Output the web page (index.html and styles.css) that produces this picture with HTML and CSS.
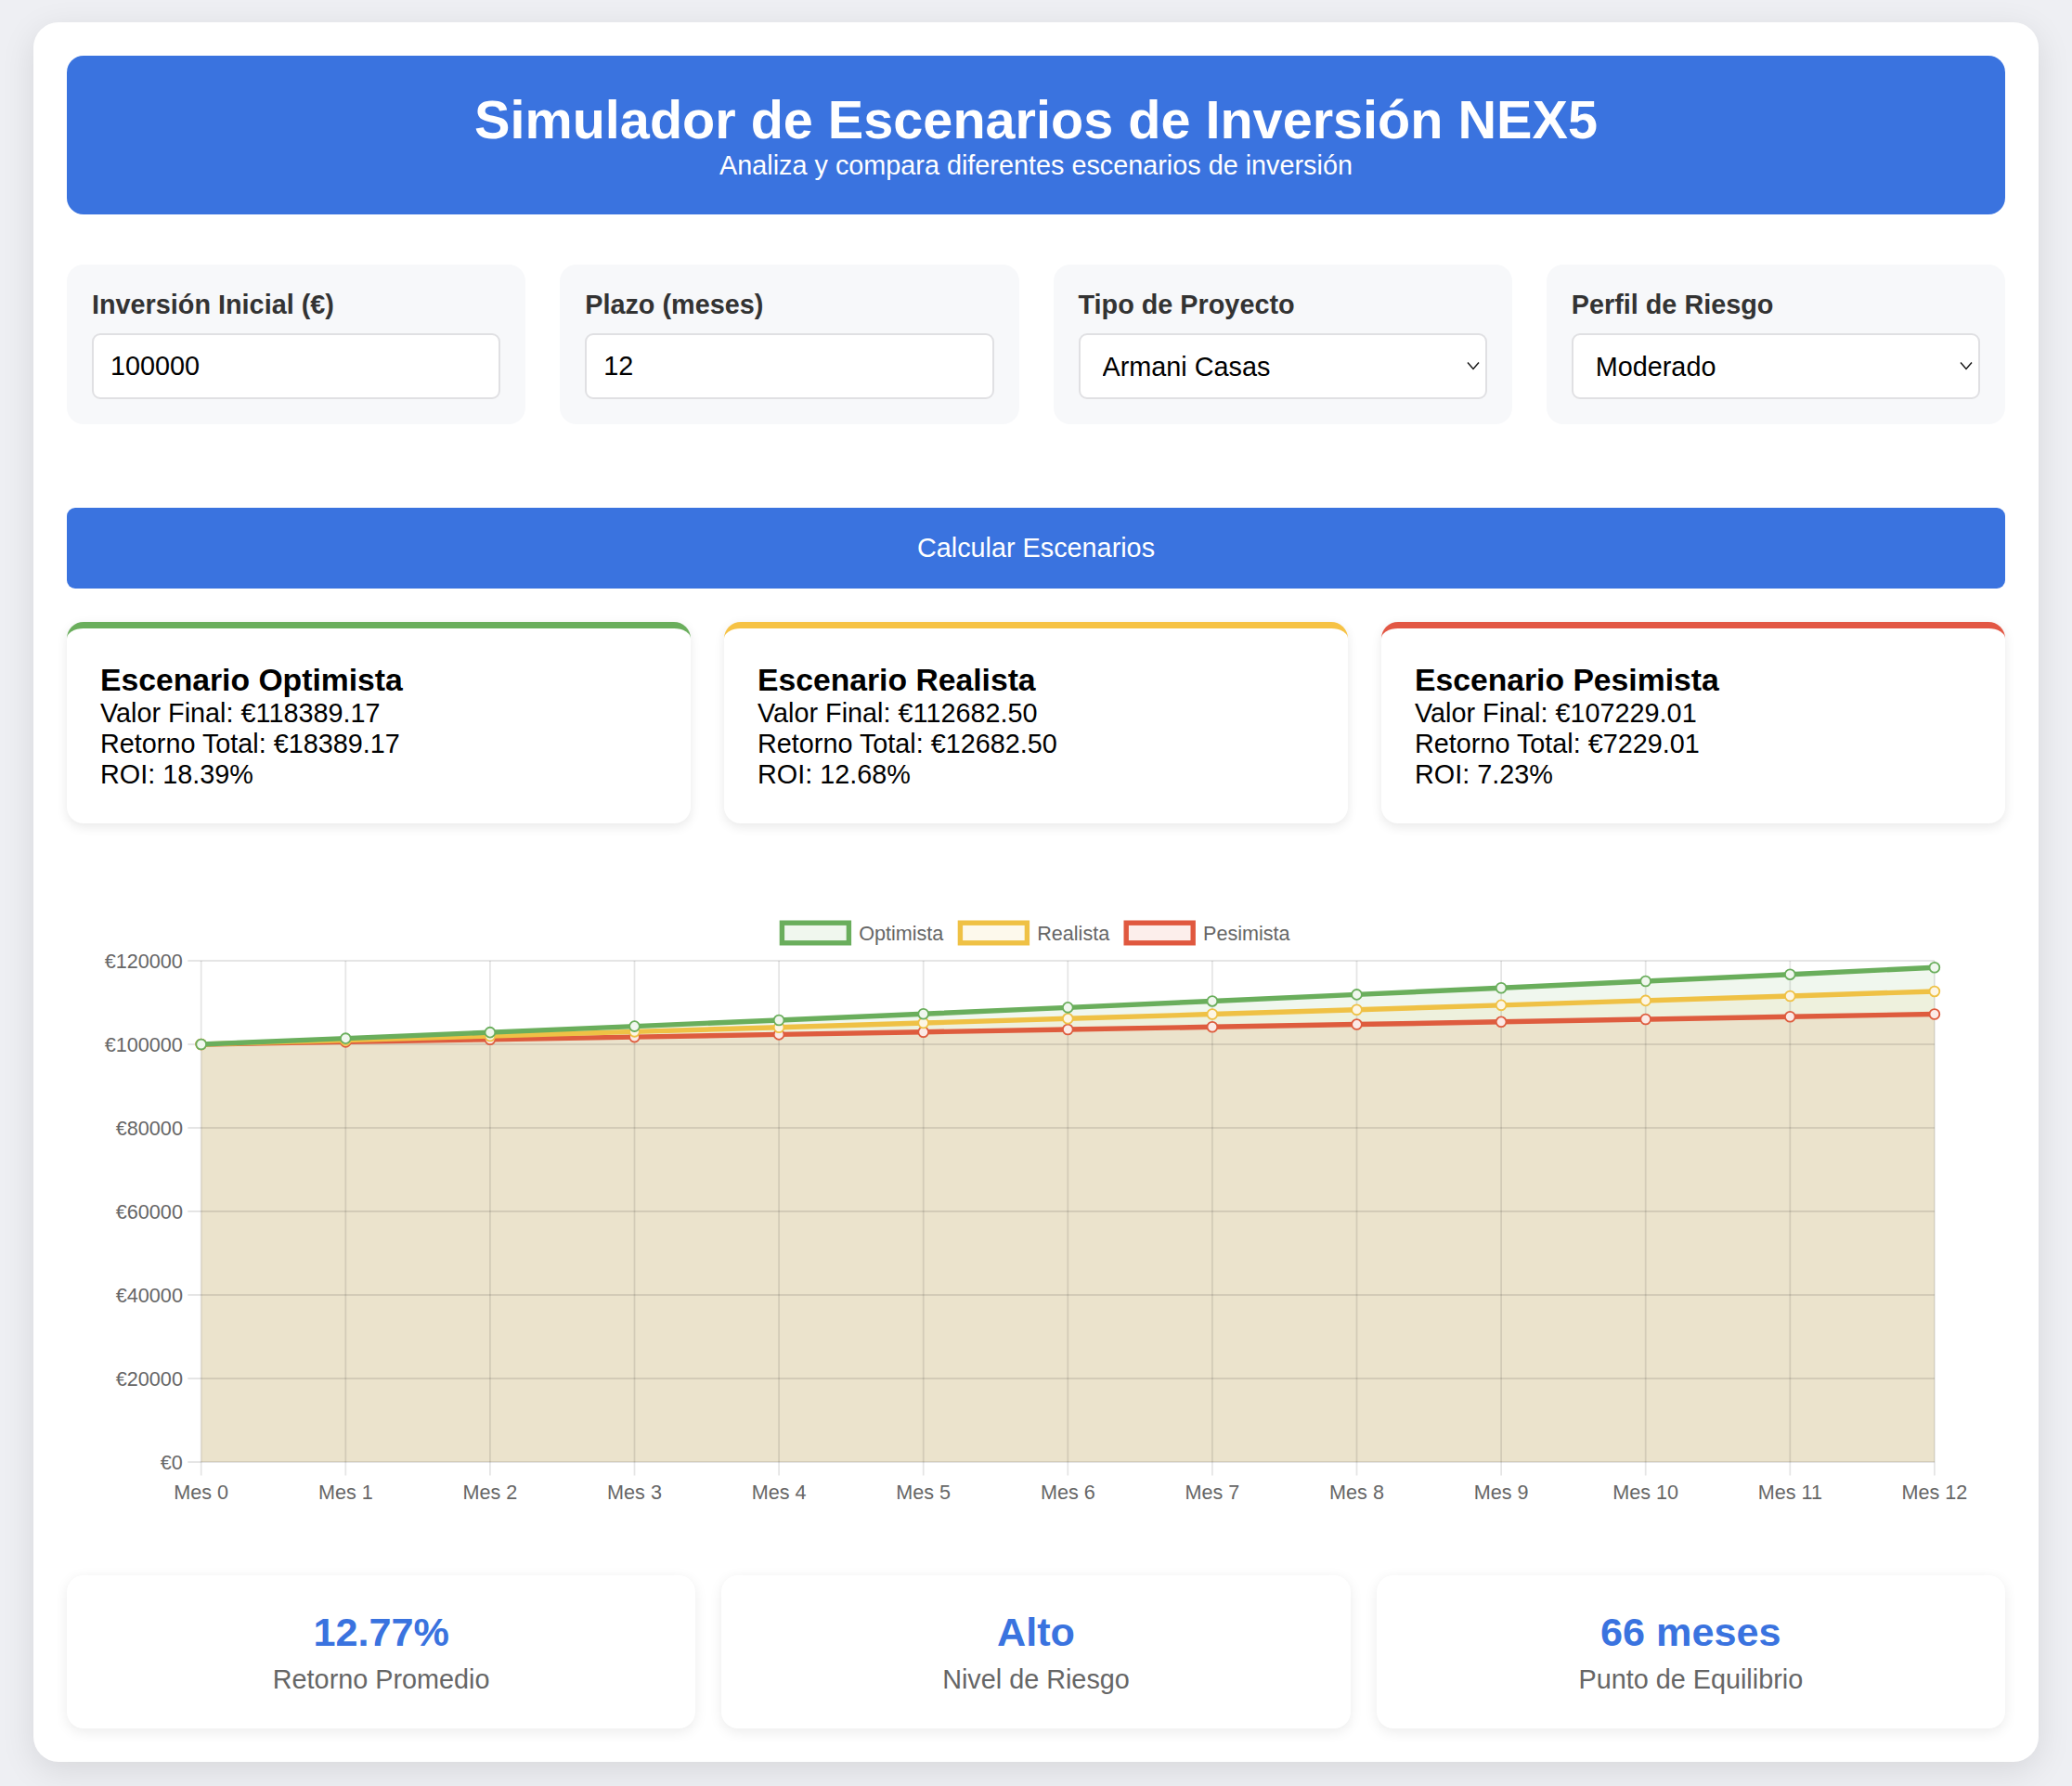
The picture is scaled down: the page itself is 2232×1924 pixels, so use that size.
FILE: index.html
```html
<!DOCTYPE html>
<html lang="es">
<head>
<meta charset="utf-8">
<title>Simulador de Escenarios de Inversión NEX5</title>
<link rel="stylesheet" href="styles.css">
</head>
<body>
<div class="container">
  <header class="hero">
    <h1>Simulador de Escenarios de Inversión NEX5</h1>
    <p>Analiza y compara diferentes escenarios de inversión</p>
  </header>

  <div class="inputs">
    <div class="field">
      <label>Inversión Inicial (€)</label>
      <input type="text" value="100000">
    </div>
    <div class="field">
      <label>Plazo (meses)</label>
      <input type="text" value="12">
    </div>
    <div class="field">
      <label>Tipo de Proyecto</label>
      <div class="select-wrap">
        <select><option>Armani Casas</option></select>
        <svg class="chev" width="14" height="10" viewBox="0 0 14 10"><polyline points="1,1.5 7,8.5 13,1.5" fill="none" stroke="#111" stroke-width="1.4"/></svg>
      </div>
    </div>
    <div class="field">
      <label>Perfil de Riesgo</label>
      <div class="select-wrap">
        <select><option>Moderado</option></select>
        <svg class="chev" width="14" height="10" viewBox="0 0 14 10"><polyline points="1,1.5 7,8.5 13,1.5" fill="none" stroke="#111" stroke-width="1.4"/></svg>
      </div>
    </div>
  </div>

  <button class="calc">Calcular Escenarios</button>

  <div class="scenarios">
    <div class="scenario optimista">
      <h3>Escenario Optimista</h3>
      <p>Valor Final: €118389.17</p>
      <p>Retorno Total: €18389.17</p>
      <p>ROI: 18.39%</p>
    </div>
    <div class="scenario realista">
      <h3>Escenario Realista</h3>
      <p>Valor Final: €112682.50</p>
      <p>Retorno Total: €12682.50</p>
      <p>ROI: 12.68%</p>
    </div>
    <div class="scenario pesimista">
      <h3>Escenario Pesimista</h3>
      <p>Valor Final: €107229.01</p>
      <p>Retorno Total: €7229.01</p>
      <p>ROI: 7.23%</p>
    </div>
  </div>

  <div class="chart">
    <svg width="2088" height="738" viewBox="72 923 2088 738">
      <defs>
        <marker id="mg" markerUnits="userSpaceOnUse" markerWidth="20" markerHeight="20" refX="10" refY="10" viewBox="0 0 20 20"><circle cx="10" cy="10" r="5.4" fill="#f0f7ee" stroke="#6aae5c" stroke-width="1.8"/></marker>
        <marker id="my" markerUnits="userSpaceOnUse" markerWidth="20" markerHeight="20" refX="10" refY="10" viewBox="0 0 20 20"><circle cx="10" cy="10" r="5.4" fill="#fdf6e4" stroke="#efc145" stroke-width="1.8"/></marker>
        <marker id="mr" markerUnits="userSpaceOnUse" markerWidth="20" markerHeight="20" refX="10" refY="10" viewBox="0 0 20 20"><circle cx="10" cy="10" r="5.4" fill="#fbeae6" stroke="#de5c3e" stroke-width="1.8"/></marker>
      </defs>

      <g class="legend">
        <rect x="842.4" y="994.2" width="72" height="21.6" fill="rgba(106,174,92,0.1)" stroke="#6aae5c" stroke-width="5.4"/>
        <text x="925.2" y="1012.7">Optimista</text>
        <rect x="1034.4" y="994.2" width="72" height="21.6" fill="rgba(239,193,69,0.1)" stroke="#efc145" stroke-width="5.4"/>
        <text x="1117.2" y="1012.7">Realista</text>
        <rect x="1213.2" y="994.2" width="72" height="21.6" fill="rgba(224,88,63,0.1)" stroke="#e0583f" stroke-width="5.4"/>
        <text x="1296" y="1012.7">Pesimista</text>
      </g>

      <polygon points="216.7,1125 372.3,1122.38 527.9,1119.73 683.5,1117.08 839.1,1114.41 994.7,1111.72 1150.3,1109.02 1305.9,1106.3 1461.5,1103.57 1617.1,1100.82 1772.7,1098.05 1928.3,1095.27 2083.9,1092.47 2083.9,1575 216.7,1575" fill="rgba(224,88,63,0.1)"/>
      <polygon points="216.7,1125 372.3,1120.5 527.9,1115.96 683.5,1111.36 839.1,1106.73 994.7,1102.05 1150.3,1097.32 1305.9,1092.54 1461.5,1087.71 1617.1,1082.84 1772.7,1077.92 1928.3,1072.95 2083.9,1067.93 2083.9,1575 216.7,1575" fill="rgba(239,193,69,0.1)"/>
      <polygon points="216.7,1125 372.3,1118.63 527.9,1112.16 683.5,1105.6 839.1,1098.95 994.7,1092.21 1150.3,1085.37 1305.9,1078.43 1461.5,1071.4 1617.1,1064.26 1772.7,1057.03 1928.3,1049.69 2083.9,1042.25 2083.9,1575 216.7,1575" fill="rgba(106,174,92,0.1)"/>

      <g class="grid">
        <line x1="202.3" y1="1035" x2="2083.9" y2="1035"/>
        <line x1="202.3" y1="1125" x2="2083.9" y2="1125"/>
        <line x1="202.3" y1="1215" x2="2083.9" y2="1215"/>
        <line x1="202.3" y1="1305" x2="2083.9" y2="1305"/>
        <line x1="202.3" y1="1395" x2="2083.9" y2="1395"/>
        <line x1="202.3" y1="1485" x2="2083.9" y2="1485"/>
        <line x1="202.3" y1="1575" x2="2083.9" y2="1575"/>
        <line x1="216.7" y1="1035" x2="216.7" y2="1589.4"/>
        <line x1="372.3" y1="1035" x2="372.3" y2="1589.4"/>
        <line x1="527.9" y1="1035" x2="527.9" y2="1589.4"/>
        <line x1="683.5" y1="1035" x2="683.5" y2="1589.4"/>
        <line x1="839.1" y1="1035" x2="839.1" y2="1589.4"/>
        <line x1="994.7" y1="1035" x2="994.7" y2="1589.4"/>
        <line x1="1150.3" y1="1035" x2="1150.3" y2="1589.4"/>
        <line x1="1305.9" y1="1035" x2="1305.9" y2="1589.4"/>
        <line x1="1461.5" y1="1035" x2="1461.5" y2="1589.4"/>
        <line x1="1617.1" y1="1035" x2="1617.1" y2="1589.4"/>
        <line x1="1772.7" y1="1035" x2="1772.7" y2="1589.4"/>
        <line x1="1928.3" y1="1035" x2="1928.3" y2="1589.4"/>
        <line x1="2083.9" y1="1035" x2="2083.9" y2="1589.4"/>
      </g>

      <g class="ylab">
        <text x="196.9" y="1042.7">€120000</text>
        <text x="196.9" y="1132.7">€100000</text>
        <text x="196.9" y="1222.7">€80000</text>
        <text x="196.9" y="1312.7">€60000</text>
        <text x="196.9" y="1402.7">€40000</text>
        <text x="196.9" y="1492.7">€20000</text>
        <text x="196.9" y="1582.7">€0</text>
      </g>
      <g class="xlab">
        <text x="216.7" y="1615">Mes 0</text>
        <text x="372.3" y="1615">Mes 1</text>
        <text x="527.9" y="1615">Mes 2</text>
        <text x="683.5" y="1615">Mes 3</text>
        <text x="839.1" y="1615">Mes 4</text>
        <text x="994.7" y="1615">Mes 5</text>
        <text x="1150.3" y="1615">Mes 6</text>
        <text x="1305.9" y="1615">Mes 7</text>
        <text x="1461.5" y="1615">Mes 8</text>
        <text x="1617.1" y="1615">Mes 9</text>
        <text x="1772.7" y="1615">Mes 10</text>
        <text x="1928.3" y="1615">Mes 11</text>
        <text x="2083.9" y="1615">Mes 12</text>
      </g>

      <polyline class="ln" points="216.7,1125 372.3,1122.38 527.9,1119.73 683.5,1117.08 839.1,1114.41 994.7,1111.72 1150.3,1109.02 1305.9,1106.3 1461.5,1103.57 1617.1,1100.82 1772.7,1098.05 1928.3,1095.27 2083.9,1092.47" stroke="#de5c3e" marker-start="url(#mr)" marker-mid="url(#mr)" marker-end="url(#mr)"/>
      <polyline class="ln" points="216.7,1125 372.3,1120.5 527.9,1115.96 683.5,1111.36 839.1,1106.73 994.7,1102.05 1150.3,1097.32 1305.9,1092.54 1461.5,1087.71 1617.1,1082.84 1772.7,1077.92 1928.3,1072.95 2083.9,1067.93" stroke="#efc145" marker-start="url(#my)" marker-mid="url(#my)" marker-end="url(#my)"/>
      <polyline class="ln" points="216.7,1125 372.3,1118.63 527.9,1112.16 683.5,1105.6 839.1,1098.95 994.7,1092.21 1150.3,1085.37 1305.9,1078.43 1461.5,1071.4 1617.1,1064.26 1772.7,1057.03 1928.3,1049.69 2083.9,1042.25" stroke="#6aae5c" marker-start="url(#mg)" marker-mid="url(#mg)" marker-end="url(#mg)"/>
    </svg>
  </div>

  <div class="stats">
    <div class="stat">
      <div class="stat-value">12.77%</div>
      <div class="stat-label">Retorno Promedio</div>
    </div>
    <div class="stat">
      <div class="stat-value">Alto</div>
      <div class="stat-label">Nivel de Riesgo</div>
    </div>
    <div class="stat">
      <div class="stat-value">66 meses</div>
      <div class="stat-label">Punto de Equilibrio</div>
    </div>
  </div>
</div>
</body>
</html>
```

FILE: styles.css
```css
* { box-sizing: border-box; }

html, body {
  margin: 0;
}

body {
  padding: 24px 36px 28px;
  background: #eeeff3;
  font-family: "Liberation Sans", Arial, Helvetica, sans-serif;
  font-size: 28.8px;
  color: #000;
}

.container {
  background: #fff;
  border-radius: 27px;
  padding: 36px;
  box-shadow: 0 9px 36px rgba(0, 0, 0, 0.1);
}

.hero {
  background: #3a73df;
  color: #fff;
  border-radius: 18px;
  padding: 36px;
  text-align: center;
}

.hero h1 {
  margin: 0;
  font-size: 57.6px;
  font-weight: bold;
}

.hero p {
  margin: 0;
  font-size: 28.8px;
}

.inputs {
  margin-top: 54px;
  display: grid;
  grid-template-columns: repeat(4, 1fr);
  gap: 37px;
}

.field {
  background: #f7f8fa;
  border-radius: 18px;
  padding: 27px;
}

.field label {
  display: block;
  font-weight: bold;
  color: #333;
  margin-bottom: 14.4px;
}

.field input,
.field select {
  display: block;
  width: 100%;
  height: 70.4px;
  border: 2px solid #e0e0e3;
  border-radius: 9px;
  background: #fff;
  font-family: inherit;
  font-size: 28.8px;
  color: #000;
  padding: 0 18px;
  outline: none;
}

.select-wrap {
  position: relative;
}

.field select {
  appearance: none;
  -webkit-appearance: none;
  padding-left: 24px;
}

.chev {
  position: absolute;
  right: 8px;
  top: 30px;
  pointer-events: none;
}

.calc {
  display: block;
  width: 100%;
  margin-top: 90.5px;
  background: #3a73df;
  color: #fff;
  border: none;
  border-radius: 9px;
  padding: 27px;
  font-family: inherit;
  font-size: 28.8px;
  line-height: normal;
}

.scenarios {
  margin-top: 36px;
  display: grid;
  grid-template-columns: repeat(3, 1fr);
  gap: 36px;
}

.scenario {
  background: #fff;
  border-radius: 18px;
  border-top: 7.2px solid #6aae5c;
  padding: 36px;
  box-shadow: 0 3.6px 12px rgba(0, 0, 0, 0.09);
}

.scenario.realista { border-top-color: #f6c244; }
.scenario.pesimista { border-top-color: #e25744; }

.scenario h3 {
  margin: 0;
  font-size: 33.7px;
  font-weight: bold;
}

.scenario p {
  margin: 0;
}

.chart {
  margin-top: 36px;
}

.chart svg {
  display: block;
  overflow: visible;
}

.chart text {
  font-family: "Liberation Sans", Arial, Helvetica, sans-serif;
  font-size: 21.6px;
  fill: #666;
}

.ylab text { text-anchor: end; }
.xlab text { text-anchor: middle; }

.grid line {
  stroke: rgba(0, 0, 0, 0.1);
  stroke-width: 1.8;
}

.ln {
  fill: none;
  stroke-width: 5.4;
}

.stats {
  margin-top: 36px;
  display: grid;
  grid-template-columns: repeat(3, 1fr);
  gap: 28px;
}

.stat {
  background: #fff;
  border-radius: 18px;
  padding: 37px 36px 36px;
  text-align: center;
  box-shadow: 0 3.6px 14px rgba(0, 0, 0, 0.08);
}

.stat-value {
  font-size: 43.2px;
  font-weight: bold;
  color: #3a73df;
  margin-bottom: 9.5px;
}

.stat-label {
  color: #666;
}
```
